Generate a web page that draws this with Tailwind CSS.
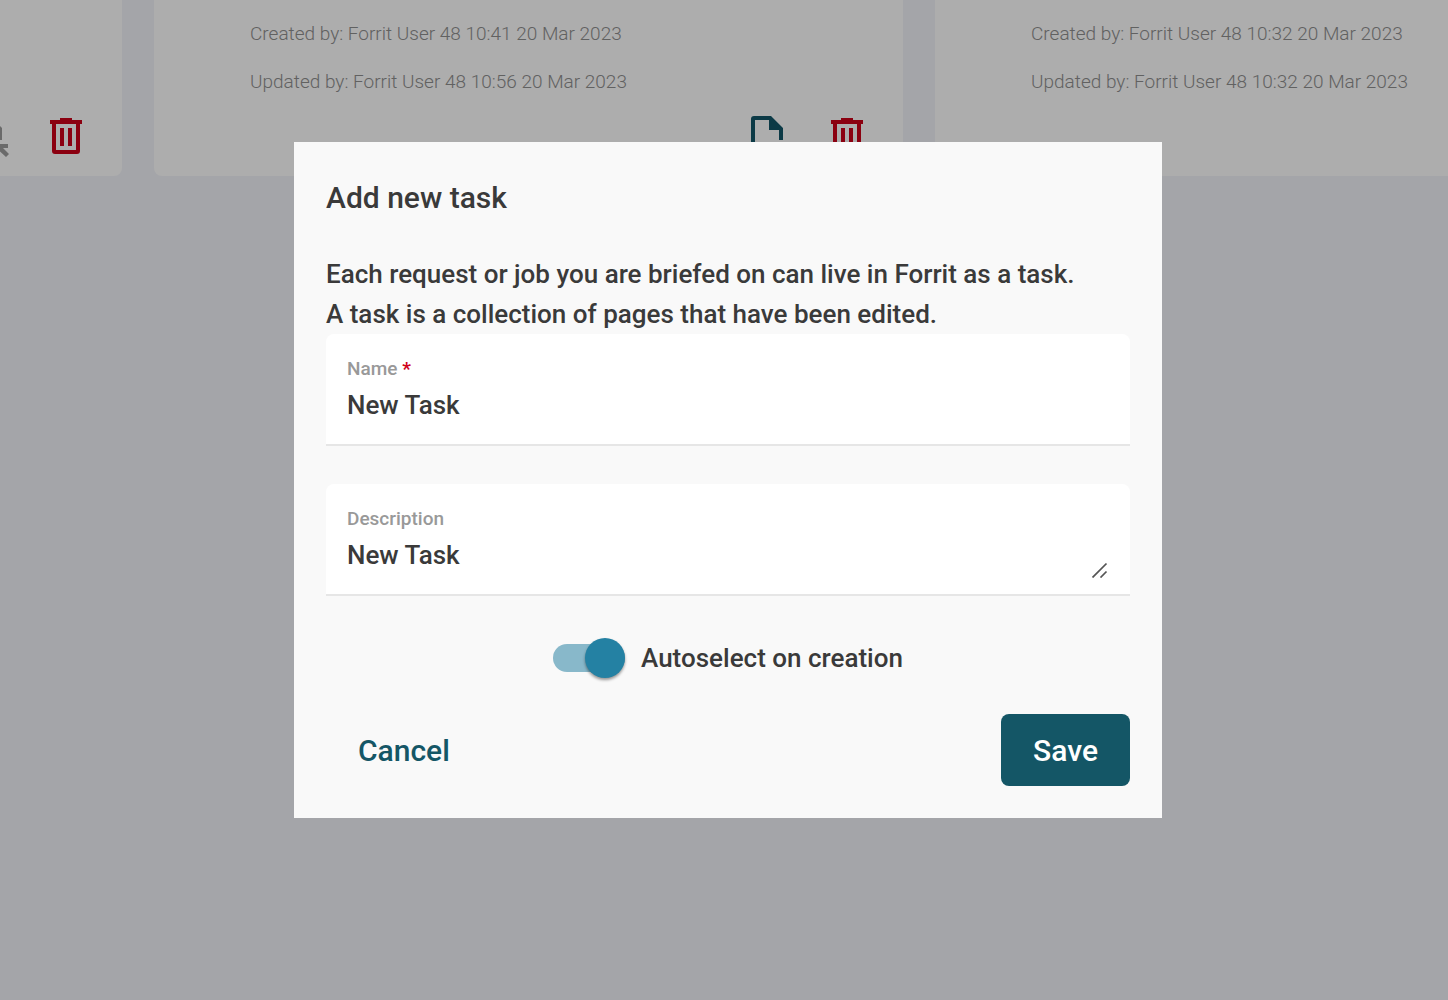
<!DOCTYPE html>
<html lang="en">
<head>
    <meta charset="UTF-8">
    <meta name="viewport" content="width=device-width, initial-scale=1.0">
    <script src="https://cdn.jsdelivr.net/npm/@tailwindcss/browser@4"></script>
    <title>Add new task</title>
</head>
<body class="bg-[#ebedf2] font-['Roboto',sans-serif] text-[#3a3a3a]">
    <!-- Icons -->
    <svg class="hidden">
        <symbol id="icon-trash" viewBox="0 0 48 48">
            <path fill="currentColor" fill-rule="evenodd" d="M18 6h12v2h10v4h-2v27q0 3-3 3H13q-3 0-3-3V12H8V8h10zM14 12v26h20V12zM18 16h4v18h-4zM26 16h4v18h-4z"/>
        </symbol>
        <symbol id="icon-page" viewBox="0 0 48 48">
            <path fill="currentColor" fill-rule="evenodd" d="M11 4h17l12 12v12h-4V18H26V8H12v32h14v4H11q-3 0-3-3V7q0-3 3-3z"/>
            <path fill="currentColor" d="M30 32h16v4h-5l6 6-3 3-10-9v10h-4z"/>
        </symbol>
    </svg>

    <!-- Task cards -->
    <main class="flex justify-start gap-8 overflow-hidden">
        <article class="w-[122px] shrink-0 flex flex-col bg-[#f8f8f8] rounded-br-lg pb-4 overflow-hidden">
            <div class="flex justify-end gap-8 mt-auto pr-8">
                <button type="button" aria-label="Open task" class="shrink-0 text-[#999]" disabled><svg class="size-12"><use href="#icon-page"/></svg></button>
                <button type="button" aria-label="Delete task" class="shrink-0 text-[#c80017]"><svg class="size-12"><use href="#icon-trash"/></svg></button>
            </div>
        </article>
        <article class="w-[749px] shrink-0 bg-[#f8f8f8] rounded-b-lg pt-[10px] pb-4">
            <div class="pl-24 mb-[6px] text-[19px] leading-12 font-light text-[#8c8c8c]">
                <p>Created by: Forrit User 48 10:41 20 Mar 2023</p>
                <p>Updated by: Forrit User 48 10:56 20 Mar 2023</p>
            </div>
            <div class="flex justify-end gap-8 pr-8">
                <button type="button" aria-label="Open task" class="text-[#125465]"><svg class="size-12"><use href="#icon-page"/></svg></button>
                <button type="button" aria-label="Delete task" class="text-[#c80017]"><svg class="size-12"><use href="#icon-trash"/></svg></button>
            </div>
        </article>
        <article class="flex-1 bg-[#f8f8f8] rounded-bl-lg pt-[10px] pb-4">
            <div class="pl-24 text-[19px] leading-12 font-light text-[#8c8c8c] whitespace-nowrap">
                <p>Created by: Forrit User 48 10:32 20 Mar 2023</p>
                <p>Updated by: Forrit User 48 10:32 20 Mar 2023</p>
            </div>
        </article>
    </main>

    <!-- Dialog -->
    <div class="fixed inset-0 flex items-center justify-center bg-black/30 pl-2 pb-10">
        <form role="dialog" aria-labelledby="dialog-title" class="w-full max-w-[868px] bg-[#f9f9f9] p-8">
            <h1 id="dialog-title" class="text-[30px] leading-12 font-medium mb-8">Add new task</h1>
            <p class="text-[26px] leading-10 font-medium">Each request or job you are briefed on can live in Forrit as a task.<br>A task is a collection of pages that have been edited.</p>

            <div class="h-28 bg-white rounded-t-lg border-b-2 border-[#e6e6e6] px-[21px] pt-[19px] mb-[38px]">
                <label for="name" class="block text-[19px] leading-8 font-medium text-[#999]">Name <span class="text-[#d0021b] font-bold">*</span></label>
                <input id="name" type="text" value="New Task" required class="block w-full h-10 text-[26px] leading-10 font-medium outline-none">
            </div>

            <div class="relative h-28 bg-white rounded-t-lg border-b-2 border-[#e6e6e6] px-[21px] pt-[19px] mb-[42px]">
                <label for="description" class="block text-[19px] leading-8 font-medium text-[#999]">Description</label>
                <textarea id="description" rows="1" class="block w-full h-10 text-[26px] leading-10 font-medium resize-none outline-none overflow-hidden">New Task</textarea>
                <!-- resize grip -->
                <svg class="absolute right-[22px] bottom-4 size-4" viewBox="0 0 16 16" fill="none" stroke="#555" stroke-width="1.75">
                    <path d="M.5 15.5l14-14M8.5 15.5l6-6"/>
                </svg>
            </div>

            <div class="flex items-center justify-center gap-4 h-10 mb-9">
                <input id="autoselect" type="checkbox" role="switch" checked class="relative appearance-none w-18 h-7 rounded-full bg-[#88b8ca] before:absolute before:-top-1.5 before:left-0 checked:before:left-8 before:size-10 before:rounded-full before:bg-[#2481a3] before:shadow-[0_2px_3px_rgba(0,0,0,0.4)]">
                <label for="autoselect" class="text-[26px] leading-10 font-medium">Autoselect on creation</label>
            </div>

            <div class="flex items-center justify-between">
                <button type="button" class="h-18 px-8 text-[30px] font-medium text-[#145666]">Cancel</button>
                <button type="submit" class="h-18 px-8 text-[30px] font-medium text-white bg-[#145666] rounded-lg">Save</button>
            </div>
        </form>
    </div>
</body>
</html>
